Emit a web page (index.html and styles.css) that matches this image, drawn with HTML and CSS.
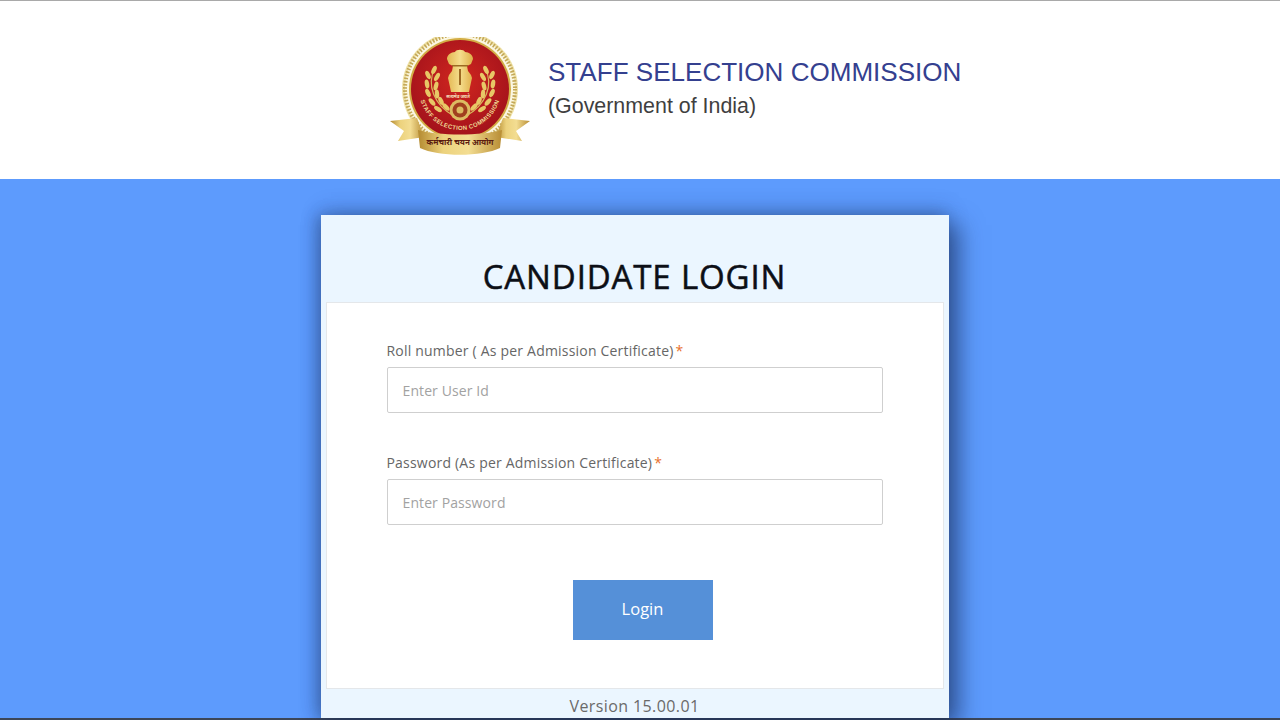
FILE: index.html
```html
<!DOCTYPE html>
<html lang="en">
<head>
<meta charset="utf-8">
<title>Candidate Login</title>
<link rel="stylesheet" href="styles.css">
</head>
<body>
<header class="site-header">
  <svg class="logo" viewBox="0 0 140 120" width="140" height="120" aria-hidden="true">
    <defs>
      <radialGradient id="red" cx="50%" cy="42%" r="58%"><stop offset="0" stop-color="#d0261f"/><stop offset="1" stop-color="#a3121b"/></radialGradient>
      <linearGradient id="gold" x1="0" x2="1" y1="0" y2="0"><stop offset="0" stop-color="#b48a30"/><stop offset=".3" stop-color="#ecd27d"/><stop offset=".6" stop-color="#f3dd92"/><stop offset="1" stop-color="#b88d34"/></linearGradient>
      <linearGradient id="body" x1="0" x2="1" y1="0" y2="0"><stop offset="0" stop-color="#e3b651"/><stop offset=".5" stop-color="#f5dd8c"/><stop offset="1" stop-color="#dfae47"/></linearGradient>
      <path id="arc" d="M29 52 A41 41 0 0 0 111 52" fill="none"/>
      <g id="wreath">
        <path d="M45 31C36 48 44 68 64 79" fill="none" stroke="#d9b65c" stroke-width="1.2"/>
        <ellipse cx="44" cy="33" rx="2.200" ry="4.500" transform="rotate(25 44 33)"/>
        <ellipse cx="38" cy="38" rx="2.200" ry="4.500" transform="rotate(-25 38 38)"/>
        <ellipse cx="47" cy="40" rx="2.200" ry="4.500" transform="rotate(30 47 40)"/>
        <ellipse cx="37" cy="47" rx="2.200" ry="4.500" transform="rotate(-10 37 47)"/>
        <ellipse cx="46" cy="49" rx="2.200" ry="4.500" transform="rotate(15 46 49)"/>
        <ellipse cx="38" cy="56" rx="2.200" ry="4.500" transform="rotate(-25 38 56)"/>
        <ellipse cx="47" cy="57" rx="2.200" ry="4.500" transform="rotate(-5 47 57)"/>
        <ellipse cx="42" cy="65" rx="2.200" ry="4.500" transform="rotate(-40 42 65)"/>
        <ellipse cx="51" cy="64" rx="2.200" ry="4.500" transform="rotate(-25 51 64)"/>
        <ellipse cx="48" cy="72" rx="2.200" ry="4.500" transform="rotate(-55 48 72)"/>
        <ellipse cx="56" cy="70" rx="2.200" ry="4.500" transform="rotate(-45 56 70)"/>
      </g>
    </defs>
    <circle cx="70" cy="52" r="58" fill="#efe2a8"/>
    <circle cx="70" cy="52" r="55" fill="#fbf7e2"/>
    <circle cx="70" cy="52" r="55" fill="none" stroke="#c4a857" stroke-width="4" stroke-dasharray="1.600 1.600"/>
    <circle cx="70" cy="52" r="51" fill="#d3ad45"/>
    <circle cx="70" cy="52" r="49" fill="url(#red)"/>
    <path d="M57 22c0-4 4-7 8-7 1-3 9-3 10 0 4 0 8 3 8 7l-2 5-4 2 1 5 3 4 1 3-2 9-1 5H61l-1-5-2-9 1-3 3-4 1-5-4-2z" fill="url(#body)"/>
    <path d="M69 32h2v16h-2zM62 28h16v1.400H62z" fill="#9c6a22"/>
    <text class="logo-satya" x="68" y="61" text-anchor="middle">सत्यमेव जयते</text>
    <use href="#wreath" fill="#e8c766"/>
    <use href="#wreath" fill="#e8c766" transform="matrix(-1 0 0 1 140 0)"/>
    <circle cx="70" cy="73" r="10.500" fill="#dcbc62"/>
    <circle cx="70" cy="73" r="7.500" fill="#a1401f"/>
    <circle cx="70" cy="73" r="3.500" fill="#dcbc62"/>
    <text class="logo-arc"><textPath href="#arc" startOffset="50%" text-anchor="middle">STAFF SELECTION COMMISSION</textPath></text>
    <path d="M0 84 L27 81 L34 100 L8 104 L14 94z" fill="url(#gold)"/>
    <path d="M140 84 L113 81 L106 100 L132 104 L126 94z" fill="url(#gold)"/>
    <path d="M28 93C48 99 92 99 112 93L110 111C92 120 48 120 30 111z" fill="url(#gold)"/>
    <text class="logo-motto" x="70" y="108" text-anchor="middle">कर्मचारी चयन आयोग</text>
  </svg>
  <div class="brand">
    <div class="brand-name">STAFF SELECTION COMMISSION</div>
    <div class="brand-sub">(Government of India)</div>
  </div>
</header>
<main class="stage">
  <section class="card">
    <h1 class="card-title">CANDIDATE LOGIN</h1>
    <form class="panel">
      <div class="field">
        <label class="field-label" for="uid">Roll number ( As per Admission Certificate)<span class="req">*</span></label>
        <input class="field-input" id="uid" type="text" placeholder="Enter User Id">
      </div>
      <div class="field">
        <label class="field-label" for="pwd">Password (As per Admission Certificate)<span class="req">*</span></label>
        <input class="field-input" id="pwd" type="password" placeholder="Enter Password">
      </div>
      <div class="actions"><button class="login" type="button">Login</button></div>
    </form>
    <div class="version">Version 15.00.01</div>
  </section>
</main>
</body>
</html>
```
FILE: styles.css
```css
html, body { margin: 0; height: 100%; }
body {
  height: 720px;
  overflow: hidden;
  display: flex;
  flex-direction: column;
  font-family: "Open Sans", sans-serif;
  background: #5d9bfd;
}
.site-header {
  height: 178px;
  flex: none;
  box-sizing: content-box;
  border-top: 1px solid #a9a9a9;
  background: #fff;
  display: flex;
  align-items: flex-start;
  padding-left: 390px;
}
.logo { margin-top: 36px; flex: none; }
.logo-arc { font: 700 6px "Liberation Sans", sans-serif; fill: #efd993; letter-spacing: .35px; }
.logo-motto { font: 700 8px "Noto Sans", "Liberation Sans", sans-serif; fill: #5b1c10; }
.logo-satya { font: 700 4.500px "Noto Sans", "Liberation Sans", sans-serif; fill: #f6e7c4; }
.brand { margin-left: 18px; padding-top: 55px; font-family: "Liberation Sans", Arial, sans-serif; }
.brand-name { font-size: 26.050px; line-height: 32px; color: #34408f; white-space: nowrap; }
.brand-sub { font-size: 21.400px; line-height: 26px; margin-top: 5px; color: #3f3f3f; }
.stage {
  flex: 1;
  min-height: 0;
  display: flex;
  justify-content: center;
  padding: 36px 11px 2px 0;
  box-sizing: border-box;
  box-shadow: inset 0 -2px 0 #3c4658;
}
.card {
  width: 628px;
  height: 503px;
  box-sizing: border-box;
  background: #ebf6ff;
  padding: 0 5px;
  display: flex;
  flex-direction: column;
  box-shadow: 10px 10px 22px rgba(25, 45, 90, .6), 0 -6px 20px rgba(25, 45, 90, .18), -5px 0 14px rgba(25, 45, 90, .3);
}
.card-title {
  margin: 0;
  height: 87px;
  box-sizing: border-box;
  padding-top: 39px;
  text-align: center;
  font-size: 33px;
  line-height: 46px;
  font-weight: 400;
  letter-spacing: .87px;
  color: #0c0f16;
  -webkit-text-stroke: .5px #0c0f16;
  white-space: nowrap;
}
.panel {
  height: 387px;
  box-sizing: border-box;
  background: #fff;
  border: 1px solid #e4e7ea;
  padding: 38px 60px 0;
  display: flex;
  flex-direction: column;
}
.field { margin-bottom: 40px; }
.field-label {
  display: block;
  font-size: 14px;
  line-height: 20px;
  letter-spacing: .2px;
  margin-bottom: 6px;
  color: #666;
}
.req { color: #e8702c; margin-left: 2px; }
.field-input {
  display: block;
  width: 496px;
  height: 46px;
  box-sizing: border-box;
  padding: 0 15px;
  border: 1px solid #cfcfcf;
  border-radius: 2px;
  background: #fff;
  font: 14px "Open Sans", sans-serif;
  letter-spacing: .1px;
  color: #555;
}
.field-input::placeholder { color: #a2a2a2; opacity: 1; }
.actions { display: flex; justify-content: center; padding-left: 16px; margin-top: 15px; }
.login {
  width: 140px;
  height: 60px;
  border: 0;
  padding: 0 0 4px;
  background: #5590d8;
  color: #fff;
  font: 16.500px "Open Sans", sans-serif;
}
.version {
  text-align: center;
  font-size: 16px;
  line-height: 22px;
  letter-spacing: .4px;
  margin-top: 6px;
  color: #6a6a6a;
}
```
